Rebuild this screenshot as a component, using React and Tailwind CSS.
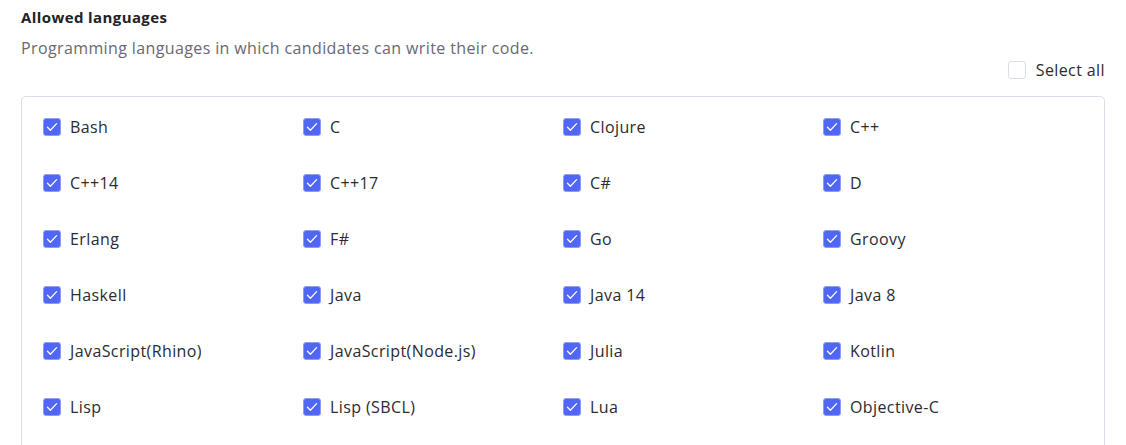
import React, { useState } from "react";

const languages = [
  "Bash", "C", "Clojure", "C++",
  "C++14", "C++17", "C#", "D",
  "Erlang", "F#", "Go", "Groovy",
  "Haskell", "Java", "Java 14", "Java 8",
  "JavaScript(Rhino)", "JavaScript(Node.js)", "Julia", "Kotlin",
  "Lisp", "Lisp (SBCL)", "Lua", "Objective-C",
];

function Box({ checked }) {
  return (
    <span
      className={`w-[18px] h-[18px] shrink-0 rounded-[3px] border flex items-center justify-center ${
        checked ? "bg-[#4f66f6] border-[#8e9cf7]" : "bg-white border-[#dcdde6]"
      }`}
    >
      {checked && (
        <svg width="12" height="10" viewBox="0 0 12 10" fill="none">
          <path d="M1.5 5.2 L4.4 8.2 L10.6 1.6" stroke="white" strokeWidth="1.3" strokeLinecap="round" strokeLinejoin="round" />
        </svg>
      )}
    </span>
  );
}

export default function App() {
  const [selected, setSelected] = useState(() => new Set(languages));

  const toggle = (lang) => {
    setSelected((prev) => {
      const next = new Set(prev);
      next.has(lang) ? next.delete(lang) : next.add(lang);
      return next;
    });
  };

  return (
    <div className="bg-white min-h-screen px-[21px] pt-[8px] font-['Open_Sans','Liberation_Sans',sans-serif]">
      {/* Header */}
      <h2 className="text-[15px] font-bold text-[#222226] leading-[18px] tracking-[0.4px]">Allowed languages</h2>
      <p className="mt-[12px] text-[16px] text-[#6a6870] leading-[20px] tracking-[0.38px]">
        Programming languages in which candidates can write their code.
      </p>

      <div className="flex justify-end w-[1084px]">
        <label className="flex items-center gap-[10px] cursor-pointer">
          <Box checked={false} />
          <span className="text-[16px] text-[#2b2a30] tracking-[0.4px]">Select all</span>
        </label>
      </div>

      {/* Languages grid */}
      <div className="mt-[14px] w-[1084px] border border-[#dcdde6] rounded-[5px] px-[21px] pt-[21px] pb-[40px]">
        <div className="grid grid-cols-[260px_260px_260px_1fr] gap-y-[38px]">
          {languages.map((lang) => (
            <label key={lang} className="flex items-center gap-[9px] h-[18px] cursor-pointer" onClick={() => toggle(lang)}>
              <Box checked={selected.has(lang)} />
              <span className="text-[16px] text-[#2b2a30] whitespace-nowrap tracking-[0.4px]">{lang}</span>
            </label>
          ))}
        </div>
      </div>
    </div>
  );
}
